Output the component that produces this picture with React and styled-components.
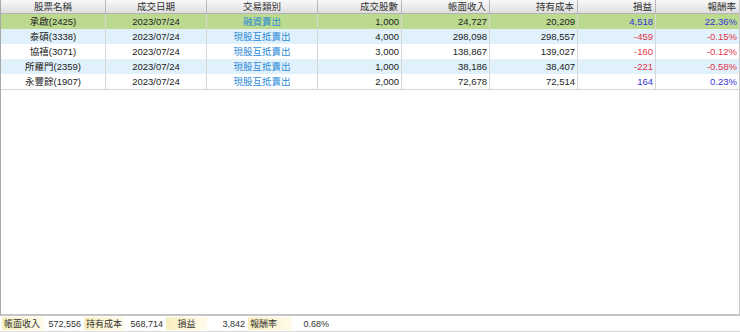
import React from "react";
import styled, { createGlobalStyle } from "styled-components";

const GlobalStyle = createGlobalStyle`
  html, body {
    margin: 0;
    padding: 0;
    background: #ffffff;
  }
  #root {
    height: 332px;
  }
`;

const columns = [
  { key: "name", label: "股票名稱", width: 106, align: "center" },
  { key: "date", label: "成交日期", width: 101, align: "center" },
  { key: "type", label: "交易類別", width: 111, align: "center" },
  { key: "qty", label: "成交股數", width: 84, align: "right" },
  { key: "income", label: "帳面收入", width: 88, align: "right" },
  { key: "cost", label: "持有成本", width: 88, align: "right" },
  { key: "pl", label: "損益", width: 78, align: "right" },
  { key: "rate", label: "報酬率", width: 84, align: "right" },
];

const rows = [
  { name: "承啟(2425)", date: "2023/07/24", type: "融資賣出", qty: "1,000", income: "24,727", cost: "20,209", pl: "4,518", rate: "22.36%" },
  { name: "泰碩(3338)", date: "2023/07/24", type: "現股互抵賣出", qty: "4,000", income: "298,098", cost: "298,557", pl: "-459", rate: "-0.15%" },
  { name: "協禧(3071)", date: "2023/07/24", type: "現股互抵賣出", qty: "3,000", income: "138,867", cost: "139,027", pl: "-160", rate: "-0.12%" },
  { name: "所羅門(2359)", date: "2023/07/24", type: "現股互抵賣出", qty: "1,000", income: "38,186", cost: "38,407", pl: "-221", rate: "-0.58%" },
  { name: "永豐餘(1907)", date: "2023/07/24", type: "現股互抵賣出", qty: "2,000", income: "72,678", cost: "72,514", pl: "164", rate: "0.23%" },
];

const summary = [
  { label: "帳面收入", value: "572,556", labelWidth: 42, valueWidth: 40, labelAlign: "left" },
  { label: "持有成本", value: "568,714", labelWidth: 40, valueWidth: 42, labelAlign: "left" },
  { label: "損益", value: "3,842", labelWidth: 41, valueWidth: 41, labelAlign: "center" },
  { label: "報酬率", value: "0.68%", labelWidth: 44, valueWidth: 40, labelAlign: "left" },
];

const rowBg = (i) => {
  if (i === 0) return "#bbda8f";
  if (i % 2 === 1) return "#e1f1fb";
  return "#ffffff";
};

const cellColor = (key, value) => {
  if (key === "type") return "#2d8ad8";
  if (key === "pl" || key === "rate") {
    return value.startsWith("-") ? "#e5344a" : "#3434d8";
  }
  return "#222222";
};

const App = () => {
  return (
    <Page>
      <GlobalStyle />
      <Grid>
        <HeaderRow>
          {columns.map((c) => (
            <HeaderCell key={c.key} $width={c.width} $align={c.align}>
              {c.label}
            </HeaderCell>
          ))}
        </HeaderRow>
        <Body>
          {rows.map((r, i) => (
            <Row key={r.name} $bg={rowBg(i)}>
              {columns.map((c) => (
                <Cell
                  key={c.key}
                  $width={c.width}
                  $align={c.align}
                  $color={cellColor(c.key, r[c.key])}
                >
                  {r[c.key]}
                </Cell>
              ))}
            </Row>
          ))}
        </Body>
      </Grid>
      <Footer>
        {summary.map((s) => (
          <React.Fragment key={s.label}>
            <SumLabel $width={s.labelWidth} $align={s.labelAlign}>
              {s.label}
            </SumLabel>
            <SumValue $width={s.valueWidth}>{s.value}</SumValue>
          </React.Fragment>
        ))}
      </Footer>
    </Page>
  );
};

const Page = styled.div`
  display: flex;
  flex-direction: column;
  height: 332px;
  width: 740px;
  font-family: "Liberation Sans", "Noto Sans CJK TC", sans-serif;
  font-size: 9.5px;
  color: #222;
`;

const Grid = styled.div`
  flex: 1;
  display: flex;
  flex-direction: column;
  border-left: 1px solid #a8a8a8;
  border-right: 1px solid #c8c8c8;
  border-bottom: 2px solid #c4c4c4;
  box-sizing: border-box;
`;

const HeaderRow = styled.div`
  display: flex;
  height: 14px;
  background: linear-gradient(to bottom, #f9f9f9, #dedede);
  border-bottom: 1px solid #b4b4b4;
  box-sizing: border-box;
`;

const HeaderCell = styled.div`
  width: ${(p) => p.$width}px;
  flex-shrink: 0;
  box-sizing: border-box;
  text-align: ${(p) => p.$align};
  padding: 0 3px;
  line-height: 13px;
  color: #333;
  border-right: 1px solid #b8b8b8;
  white-space: nowrap;
  &:first-child {
    width: ${(p) => p.$width - 1}px;
  }
  &:last-child {
    border-right: none;
    width: ${(p) => p.$width - 1}px;
  }
`;

const Body = styled.div`
  display: flex;
  flex-direction: column;
  border-bottom: 1px solid #d4d4d4;
`;

const Row = styled.div`
  display: flex;
  height: 15px;
  background: ${(p) => p.$bg};
`;

const Cell = styled.div`
  width: ${(p) => p.$width}px;
  flex-shrink: 0;
  box-sizing: border-box;
  text-align: ${(p) => p.$align};
  padding: 0 2px;
  line-height: 15px;
  color: ${(p) => p.$color};
  border-right: 1px solid #d6d6d6;
  white-space: nowrap;
  &:first-child {
    width: ${(p) => p.$width - 1}px;
  }
  &:last-child {
    border-right: none;
    width: ${(p) => p.$width - 1}px;
  }
`;

const Footer = styled.div`
  display: flex;
  height: 16px;
  padding: 1px 0 1px 2px;
  box-sizing: border-box;
  border-bottom: 1px solid #d8d8d8;
  font-size: 9px;
  color: #333;
`;

const SumLabel = styled.div`
  width: ${(p) => p.$width}px;
  box-sizing: border-box;
  text-align: ${(p) => p.$align};
  padding: 0 2px;
  line-height: 14px;
  background: linear-gradient(to right, #f8efbf, #fffbea);
  white-space: nowrap;
`;

const SumValue = styled.div`
  width: ${(p) => p.$width}px;
  box-sizing: border-box;
  text-align: right;
  padding-right: 3px;
  line-height: 14px;
  white-space: nowrap;
`;

export default App;
